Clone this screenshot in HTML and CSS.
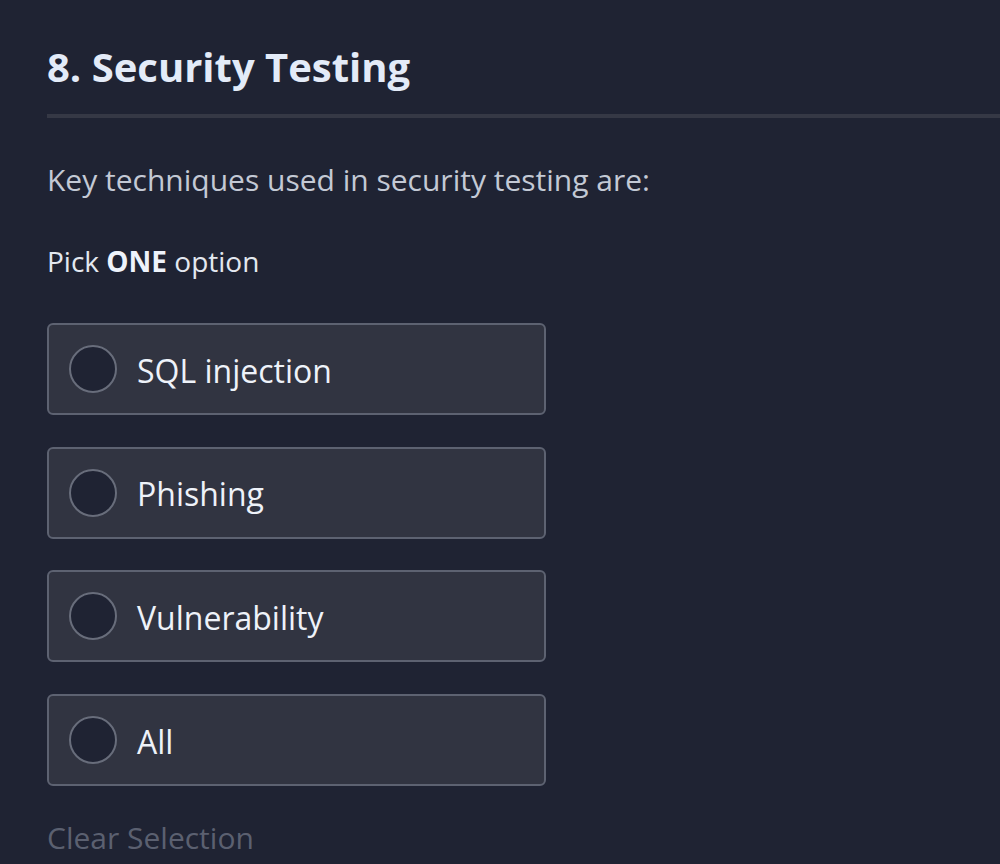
FILE: index.html
```html
<!DOCTYPE html>
<html lang="en">
<head>
<meta charset="utf-8">
<title>Security Testing</title>
<link rel="stylesheet" href="styles.css">
</head>
<body>
<main class="quiz">
  <h1 class="title">8. Security Testing</h1>
  <div class="divider"></div>
  <p class="question">Key techniques used in security testing are:</p>
  <p class="hint">Pick <strong>ONE</strong> option</p>
  <div class="options">
    <label class="option"><span class="radio"></span><span class="label">SQL injection</span></label>
    <label class="option"><span class="radio"></span><span class="label">Phishing</span></label>
    <label class="option"><span class="radio"></span><span class="label">Vulnerability</span></label>
    <label class="option"><span class="radio"></span><span class="label">All</span></label>
  </div>
  <div class="clear">Clear Selection</div>
</main>
</body>
</html>
```
FILE: styles.css
```css
html, body {
  margin: 0;
  padding: 0;
  background: #1f2333;
  height: 100%;
  overflow: hidden;
}
body {
  font-family: "Open Sans", "Noto Sans", sans-serif;
}
.quiz {
  padding: 43px 0 0 47px;
}
.title {
  margin: 0;
  font-size: 40px;
  line-height: 48px;
  font-weight: 700;
  color: #e3ebf8;
}
.divider {
  margin-top: 23px;
  height: 4px;
  background: #353845;
}
.question {
  margin: 39px 0 0;
  font-size: 30px;
  line-height: 45px;
  color: #c3c9d5;
}
.hint {
  margin: 38px 0 0;
  font-size: 28px;
  line-height: 42px;
  color: #e3e8f0;
}
.hint strong {
  font-weight: 700;
  color: #eef3fb;
}
.options {
  margin-top: 41px;
  width: 499px;
  display: flex;
  flex-direction: column;
  gap: 31.7px;
}
.option {
  box-sizing: border-box;
  height: 92px;
  display: flex;
  align-items: center;
  gap: 20px;
  padding-left: 20px;
  background: #313441;
  border: 2px solid #5d6271;
  border-radius: 6px;
}
.radio {
  box-sizing: border-box;
  width: 48px;
  height: 48px;
  border-radius: 50%;
  border: 2px solid #686d7b;
  background: #1f2333;
  flex: none;
}
.label {
  padding-top: 3px;
  font-size: 32px;
  line-height: 40px;
  color: #eef2f9;
}
.clear {
  margin-top: 29px;
  font-size: 30px;
  line-height: 45px;
  color: #5b6070;
}
```
